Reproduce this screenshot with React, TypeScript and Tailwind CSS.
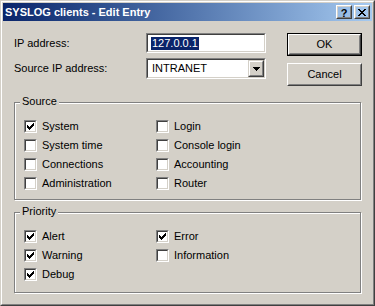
import React from "react";

const checkPath =
  "M6 0h1v1h-1z M5 1h2v1h-2z M0 2h1v1h-1z M4 2h3v1h-3z M0 3h2v1h-2z M3 3h3v1h-3z M0 4h5v1h-5z M1 5h3v1h-3z M2 6h1v1h-1z";

const closePath =
  "M0 0h2v1h-2z M6 0h2v1h-2z M1 1h2v1h-2z M5 1h2v1h-2z M2 2h4v1h-4z M3 3h2v1h-2z M2 4h4v1h-4z M1 5h2v1h-2z M5 5h2v1h-2z M0 6h2v1h-2z M6 6h2v1h-2z";

function Checkbox({ label, checked }: { label: string; checked?: boolean }) {
  return (
    <div className="flex items-center gap-[5px] h-[19px]">
      <div className="w-[13px] h-[13px] border border-t-[#808080] border-l-[#808080] border-b-white border-r-white">
        <div className="w-full h-full border border-t-[#404040] border-l-[#404040] border-b-[#d4d0c8] border-r-[#d4d0c8] bg-white">
          {checked && (
            <svg width="7" height="7" viewBox="0 0 7 7" className="ml-px mt-px" shapeRendering="crispEdges">
              <path d={checkPath} fill="#000" />
            </svg>
          )}
        </div>
      </div>
      <span className="leading-[13px]">{label}</span>
    </div>
  );
}

function Group({ title, height, children }: { title: string; height: string; children: React.ReactNode }) {
  return (
    <div
      className={`relative ml-[11px] w-[347px] ${height} border border-[#808080] shadow-[inset_1px_1px_0_#fff,1px_1px_0_#fff] pt-[14px] pl-[9px]`}
    >
      <span className="absolute -top-[8px] left-[5px] px-[2px] h-[13px] leading-[13px] bg-[#d4d0c8]">
        {title}
      </span>
      <div className="grid grid-cols-[132px_1fr]">{children}</div>
    </div>
  );
}

function Raised({ children, className }: { children: React.ReactNode; className?: string }) {
  return (
    <div className={`border border-t-white border-l-white border-r-[#404040] border-b-[#404040] ${className ?? ""}`}>
      <div className="w-full h-full border border-t-[#d4d0c8] border-l-[#d4d0c8] border-r-[#808080] border-b-[#808080] flex items-center justify-center">
        {children}
      </div>
    </div>
  );
}

export default function App() {
  return (
    <div className="w-[375px] h-[306px] bg-[#d4d0c8] text-black text-[11px] font-['Liberation_Sans',Arial,sans-serif] border border-t-[#d4d0c8] border-l-[#d4d0c8] border-r-[#404040] border-b-[#404040]">
      <div className="h-full border border-t-white border-l-white border-r-[#808080] border-b-[#808080] p-px flex flex-col">
        {/* Title bar */}
        <div className="h-[18px] bg-linear-to-r from-[#0a246a] to-[#a6caf0] flex items-center pl-[2px] pr-[2px]">
          <span className="flex-1 text-white font-bold text-[11px] leading-[13px]">SYSLOG clients - Edit Entry</span>
          <div className="flex gap-[2px]">
            <Raised className="w-[16px] h-[14px]">
              <span className="font-bold text-[11px] leading-[10px] mt-px">?</span>
            </Raised>
            <Raised className="w-[16px] h-[14px]">
              <svg width="8" height="7" viewBox="0 0 8 7" shapeRendering="crispEdges">
                <path d={closePath} fill="#000" />
              </svg>
            </Raised>
          </div>
        </div>

        {/* Address fields + buttons */}
        <div className="flex pl-[11px] pt-[12px]">
          <div className="w-[132px] flex flex-col">
            <div className="h-[20px] flex items-center">IP address:</div>
            <div className="h-[21px] mt-[5px] flex items-center">Source IP address:</div>
          </div>
          <div className="w-[120px] flex flex-col gap-[5px]">
            <div className="h-[20px] border border-t-[#808080] border-l-[#808080] border-b-white border-r-white">
              <div className="h-full border border-t-[#404040] border-l-[#404040] border-b-[#d4d0c8] border-r-[#d4d0c8] bg-white flex items-center pl-[3px]">
                <span className="bg-[#0a246a] text-white px-px h-[13px] leading-[13px]">127.0.0.1</span>
              </div>
            </div>
            <div className="h-[21px] border border-t-[#808080] border-l-[#808080] border-b-white border-r-white">
              <div className="h-full border border-t-[#404040] border-l-[#404040] border-b-[#d4d0c8] border-r-[#d4d0c8] bg-white flex items-center">
                <span className="flex-1 pl-[4px]">INTRANET</span>
                <div className="h-full w-[16px] border border-t-[#d4d0c8] border-l-[#d4d0c8] border-r-[#404040] border-b-[#404040]">
                  <div className="w-full h-full border border-t-white border-l-white border-r-[#808080] border-b-[#808080] bg-[#d4d0c8] flex items-center justify-center">
                    <svg width="7" height="4" viewBox="0 0 7 4" shapeRendering="crispEdges">
                      <path d="M0 0h7v1h-7z M1 1h5v1h-5z M2 2h3v1h-3z M3 3h1v1h-1z" fill="#000" />
                    </svg>
                  </div>
                </div>
              </div>
            </div>
          </div>
          <div className="ml-[21px] flex flex-col gap-[7px]">
            <div className="w-[75px] h-[23px] border border-black">
              <div className="w-full h-full border border-t-white border-l-white border-r-[#404040] border-b-[#404040]">
                <div className="w-full h-full border border-t-[#d4d0c8] border-l-[#d4d0c8] border-r-[#808080] border-b-[#808080] flex items-center justify-center">
                  OK
                </div>
              </div>
            </div>
            <Raised className="w-[75px] h-[23px]">Cancel</Raised>
          </div>
        </div>

        {/* Source */}
        <div className="mt-[16px]">
          <Group title="Source" height="h-[98px]">
            <Checkbox label="System" checked />
            <Checkbox label="Login" />
            <Checkbox label="System time" />
            <Checkbox label="Console login" />
            <Checkbox label="Connections" />
            <Checkbox label="Accounting" />
            <Checkbox label="Administration" />
            <Checkbox label="Router" />
          </Group>
        </div>

        {/* Priority */}
        <div className="mt-[12px]">
          <Group title="Priority" height="h-[81px]">
            <Checkbox label="Alert" checked />
            <Checkbox label="Error" checked />
            <Checkbox label="Warning" checked />
            <Checkbox label="Information" />
            <Checkbox label="Debug" checked />
          </Group>
        </div>
      </div>
    </div>
  );
}
